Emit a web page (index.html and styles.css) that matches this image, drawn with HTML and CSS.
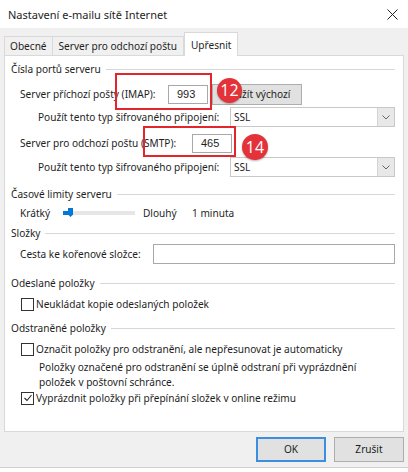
FILE: index.html
```html
<!DOCTYPE html>
<html lang="cs">
<head>
    <meta charset="UTF-8">
    <title>Nastavení e-mailu sítě Internet</title>
    <link rel="stylesheet" href="styles.css">
</head>
<body>
    <div class="dialog">
        <div class="titlebar">
            <span class="title">Nastavení e-mailu sítě Internet</span>
            <svg class="close" width="11" height="11" viewBox="0 0 11 11">
                <path d="M0.5 0.5 L10.5 10.5 M10.5 0.5 L0.5 10.5" stroke="#222" stroke-width="1"/>
            </svg>
        </div>

        <!-- tabs -->
        <div class="tabs">
            <div class="tab">Obecné</div>
            <div class="tab tab-wide">Server pro odchozí poštu</div>
            <div class="tab active">Upřesnit</div>
        </div>

        <div class="panel">
            <div class="group-title">Čísla portů serveru</div>
            <div class="row row-port1">
                <span class="lbl">Server příchozí pošty (IMAP):</span>
                <div class="textbox port">993</div>
                <div class="btn btn-default">Použít výchozí</div>
            </div>
            <div class="row row-enc">
                <span class="lbl">Použít tento typ šifrovaného připojení:</span>
                <div class="select">
                    <span>SSL</span>
                    <span class="arrow">
                        <svg width="8" height="5" viewBox="0 0 8 5"><path d="M0.5 0.5 L4 4 L7.5 0.5" fill="none" stroke="#666"/></svg>
                    </span>
                </div>
            </div>
            <div class="row row-port2">
                <span class="lbl">Server pro odchozí poštu (SMTP):</span>
                <div class="textbox port">465</div>
            </div>
            <div class="row row-enc row-enc2">
                <span class="lbl">Použít tento typ šifrovaného připojení:</span>
                <div class="select">
                    <span>SSL</span>
                    <span class="arrow">
                        <svg width="8" height="5" viewBox="0 0 8 5"><path d="M0.5 0.5 L4 4 L7.5 0.5" fill="none" stroke="#666"/></svg>
                    </span>
                </div>
            </div>

            <div class="group-title g2">Časové limity serveru</div>
            <div class="row row-timeout">
                <span class="lbl">Krátký</span>
                <svg class="slider" width="72" height="12" viewBox="0 0 72 12">
                    <rect x="0" y="4" width="72" height="4" fill="#e6e6e6"/>
                    <rect x="0" y="4" width="6" height="4" fill="#0078d7"/>
                    <path d="M5 1 H10 V7.5 L7.5 10 L5 7.5 Z" fill="#0078d7"/>
                </svg>
                <span class="lbl long">Dlouhý</span>
                <span class="lbl">1 minuta</span>
            </div>

            <div class="group-title g3">Složky</div>
            <div class="row row-path">
                <span class="lbl">Cesta ke kořenové složce:</span>
                <div class="textbox path"></div>
            </div>

            <div class="group-title g4">Odeslané položky</div>
            <div class="row check cb1">
                <span class="box"></span>
                <span>Neukládat kopie odeslaných položek</span>
            </div>

            <div class="group-title g5">Odstraněné položky</div>
            <div class="row check cb2">
                <span class="box"></span>
                <span>Označit položky pro odstranění, ale nepřesunovat je automaticky</span>
            </div>
            <p class="note">Položky označené pro odstranění se úplně odstraní při vyprázdnění položek v poštovní schránce.</p>
            <div class="row check cb3">
                <span class="box">
                    <svg width="10" height="10" viewBox="0 0 10 10"><path d="M1.5 5 L4 7.5 L8.5 2" fill="none" stroke="#222" stroke-width="1.1"/></svg>
                </span>
                <span>Vyprázdnit položky při přepínání složek v online režimu</span>
            </div>

            <!-- annotations drawn over the screenshot -->
            <span class="mark mark-imap"></span>
            <span class="badge badge-imap">12</span>
            <span class="mark mark-smtp"></span>
            <span class="badge badge-smtp">14</span>
        </div>

        <div class="footer">
            <div class="btn btn-ok">OK</div>
            <div class="btn">Zrušit</div>
        </div>
    </div>
</body>
</html>
```

FILE: styles.css
```css
* {
    box-sizing: border-box;
}

body {
    margin: 0;
    background: #fff;
    font-family: "Noto Sans", "Open Sans", sans-serif;
    font-size: 10.1px;
    color: #1e1e1e;
}

.dialog {
    width: 408px;
    height: 468px;
    background: #f0f0f0;
    border-bottom: 1px solid #cfcfcf;
}

/* title bar */
.titlebar {
    height: 28px;
    background: #fff;
    display: flex;
    align-items: center;
    justify-content: space-between;
    padding: 0 10px 0 8px;
}

.title {
    font-size: 11px;
}

/* tabs */
.tabs {
    display: flex;
    align-items: flex-end;
    height: 28px;
    margin-bottom: -1px;
    padding-left: 4px;
    position: relative;
    z-index: 1;
}

.tab {
    height: 19px;
    margin-bottom: 1px;
    padding: 0 5px;
    line-height: 18px;
    border: 1px solid #d9d9d9;
    border-bottom: none;
    background: #f0f0f0;
}

.tab + .tab {
    border-left: none;
}

.tab-wide {
    padding: 0 6px;
}

.tab.active {
    height: 24px;
    margin-bottom: 0;
    padding: 0 6px;
    line-height: 24px;
    background: #fff;
    border-left: 1px solid #d9d9d9;
}

/* tab panel */
.panel {
    position: relative;
    height: 377px;
    margin: 0 4px;
    padding: 6px 8px 0 6px;
    background: #fff;
    border: 1px solid #d9d9d9;
}

.group-title {
    display: flex;
    align-items: center;
    height: 14px;
    line-height: 14px;
}

.group-title::after {
    content: "";
    flex: 1;
    height: 1px;
    margin-left: 5px;
    background: #d8d8d8;
}

.g2 { margin-top: 10px; }
.g3 { margin-top: 6px; }
.g4 { margin-top: 12px; }
.g5 { margin-top: 10px; }

.row {
    display: flex;
    align-items: center;
    margin-left: 9px;
}

.row .lbl {
    white-space: nowrap;
}

.row-port1 { height: 22px; margin-top: 7px; }
.row-port1 .lbl { width: 148px; }
.row-port2 { height: 22px; margin-top: 5px; }
.row-port2 .lbl { width: 172px; }

.row-enc { height: 20px; margin-top: 2px; margin-left: 27px; }
.row-enc .lbl { width: 192px; }
.row-enc2 { margin-top: 3px; }

.row-timeout { height: 14px; margin-top: 5px; }
.row-path { height: 20px; margin-top: 4px; }
.row-path .lbl { width: 133px; }

.textbox {
    height: 19px;
    border: 1px solid #a8a8a8;
    background: #fff;
    line-height: 17px;
}

.port {
    width: 40px;
    padding-left: 8px;
    font-family: "Liberation Sans", sans-serif;
    font-size: 11px;
}

.path {
    flex: 1;
    height: 20px;
}

.btn {
    height: 25px;
    width: 70px;
    line-height: 23px;
    text-align: center;
    border: 1px solid #adadad;
    background: #e1e1e1;
}

.btn-default {
    width: 90px;
    height: 21px;
    line-height: 19px;
    margin-left: 4px;
}

.select {
    flex: 1;
    display: flex;
    align-items: center;
    justify-content: space-between;
    height: 20px;
    padding-left: 3px;
    border: 1px solid #c8c8c8;
    background: #fff;
}

.select .arrow {
    display: flex;
    align-items: center;
    justify-content: center;
    width: 17px;
    height: 18px;
    background: #e8e8e8;
    border-left: 1px solid #d4d4d4;
}

.row-timeout .lbl:first-child {
    width: 43px;
}

.long {
    width: 49px;
    margin-left: 8px;
}

.check {
    height: 14px;
    margin-left: 10px;
}

.check .box {
    display: flex;
    align-items: center;
    justify-content: center;
    width: 13px;
    height: 13px;
    margin-right: 2px;
    border: 1px solid #333;
    background: #fff;
}

.cb1 { margin-top: 7px; }
.cb2 { margin-top: 7px; }
.cb3 { margin-top: 1px; }

.note {
    margin: 4px 0 0 28px;
    width: 335px;
    line-height: 15px;
}

/* red annotations */
.mark {
    position: absolute;
    border: 2px solid #e3262c;
}

.mark-imap {
    left: 110px;
    top: 17px;
    width: 97px;
    height: 37px;
}

.mark-smtp {
    left: 138px;
    top: 70px;
    width: 93px;
    height: 31px;
}

.badge {
    position: absolute;
    width: 25px;
    height: 25px;
    border-radius: 50%;
    background: #e3323a;
    color: #fff;
    font-family: "Open Sans", sans-serif;
    font-size: 16px;
    line-height: 25px;
    text-align: center;
    box-shadow: 0 1px 2px rgba(0, 0, 0, 0.3);
}

.badge-imap {
    left: 212px;
    top: 22px;
}

.badge-smtp {
    left: 237px;
    top: 78px;
    width: 26px;
    height: 26px;
    line-height: 26px;
}

/* buttons */
.footer {
    display: flex;
    justify-content: flex-end;
    gap: 8px;
    padding: 5px 4px 0 0;
}

.btn-ok {
    border: 2px solid #3c8ee0;
    line-height: 21px;
}
```
